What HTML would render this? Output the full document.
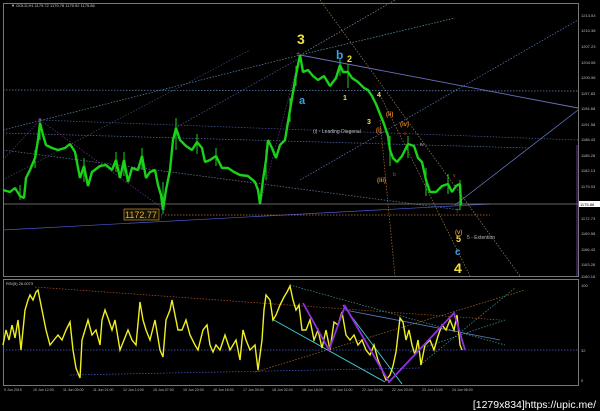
<!DOCTYPE html>
<html><head><meta charset="utf-8"><style>
html,body{margin:0;padding:0;background:#000;width:600px;height:411px;overflow:hidden}
svg{display:block}
text{font-family:"Liberation Sans",sans-serif}
</style></head><body>
<svg width="600" height="411" viewBox="0 0 600 411" xmlns="http://www.w3.org/2000/svg">
<rect width="600" height="411" fill="#000"/>
<rect x="3.5" y="3.5" width="575" height="273" fill="none" stroke="#777" stroke-width="1"/>
<rect x="3.5" y="279.5" width="575" height="106" fill="none" stroke="#777" stroke-width="1"/>
<text x="11" y="7" fill="#ccc" font-size="4">▼ GOLD,H1  1179.72 1179.78 1175.92 1175.86</text>
<g fill="none" stroke-width="0.7">
<line x1="3" y1="130" x2="300" y2="55" stroke="#5a8fb0" stroke-dasharray="1.5,1.5"/>
<line x1="300" y1="55" x2="455" y2="18" stroke="#5a9fb0" stroke-dasharray="1.5,1.5"/>
<line x1="300" y1="55" x2="395" y2="0" stroke="#7a8fb0" stroke-dasharray="1.5,1.5"/>
<line x1="40" y1="120" x2="578" y2="140" stroke="#4a5aa0" stroke-dasharray="1.5,1.5"/>
<line x1="175" y1="128" x2="300" y2="58" stroke="#4a5aa0" stroke-dasharray="1.5,1.5"/>
<line x1="300" y1="55" x2="578" y2="108" stroke="#6a70c0" stroke-width="0.9"/>
<line x1="3" y1="90" x2="578" y2="91" stroke="#6a90c0" stroke-dasharray="1.5,1.5"/>
<line x1="3" y1="133" x2="530" y2="148" stroke="#5a70b0" stroke-dasharray="1.5,1.5"/>
<line x1="3" y1="150" x2="460" y2="210" stroke="#6080a0" stroke-dasharray="1.5,1.5"/>
<line x1="300" y1="180" x2="578" y2="20" stroke="#5a80c0" stroke-dasharray="1.5,1.5"/>
<line x1="3" y1="180" x2="250" y2="50" stroke="#5a80c0" stroke-dasharray="1.5,1.5" opacity="0.6"/>
<line x1="455" y1="205" x2="578" y2="110" stroke="#6a80d0"/>
<line x1="3" y1="230" x2="490" y2="204" stroke="#4a5ad0"/>
<line x1="3" y1="204" x2="578" y2="204" stroke="#888"/>
<line x1="165" y1="215" x2="490" y2="215" stroke="#c07030" stroke-dasharray="1.5,1.5"/>
<line x1="320" y1="0" x2="520" y2="276" stroke="#a08060" stroke-dasharray="1.5,1.5"/>
<line x1="380" y1="95" x2="470" y2="276" stroke="#a08040" stroke-dasharray="1.5,1.5"/>
<line x1="380" y1="120" x2="395" y2="276" stroke="#b07030" stroke-dasharray="1.5,1.5"/>
<line x1="40" y1="120" x2="165" y2="210" stroke="#7a3090" stroke-dasharray="1.5,1.5"/>
<line x1="3" y1="160" x2="40" y2="120" stroke="#6a3090" stroke-dasharray="1.5,1.5"/>
<line x1="260" y1="205" x2="300" y2="55" stroke="#6a3090" stroke-dasharray="1.5,1.5"/>
</g>
<g fill="none" stroke="#19d219" stroke-linejoin="bevel">
<polyline stroke-width="2.4" points="3,190 10,192 15,188 20,196 24,198 26,178 30,170 35,158 38,140 40,123 43,135 46,145 52,148 58,150 65,148 70,144 75,152 80,178 84,166 88,186 92,172 100,166 106,165 112,170 116,160 120,178 124,160 128,182 132,168 138,170 142,156 146,178 150,172 155,170 158,185 161,195 163,210 166,190 170,170 173,140 176,128 180,140 186,146 192,150 197,142 202,148 205,162 210,160 216,156 222,168 228,168 234,172 240,175 248,176 255,182 258,190 260,204 263,180 266,160 268,140 272,148 276,158 280,145 285,140 290,110 292,98 296,75 300,55 303,72 308,70 313,76 318,80 324,76 330,86 336,78 340,65 343,72 348,72 352,78 358,82 364,88 368,90 372,96 376,104 380,114 384,124 388,136 390,150 393,158 397,162 402,156 408,144 414,146 418,158 422,162 426,180 430,192 436,192 442,186 448,184 452,192 456,186 460,184 461,205"/>
<path stroke-width="1" d="M20 185V200M35 150V168M40 118V140M84 158V182M116 152V172M124 152V176M142 148V170M163 182V214M176 118V150M197 134V154M216 148V166M266 150V180M290 98V122M296 66V86M340 58V76M348 64V88M390 136V166M408 136V158M426 168V196M448 174V194M460 180V210"/>
</g>
<g font-weight="bold">
<text x="297" y="44" fill="#f0e040" font-size="14">3</text>
<text x="336" y="59" fill="#3aa0e8" font-size="12">b</text>
<text x="347" y="62" fill="#f0e040" font-size="9">2</text>
<text x="299" y="104" fill="#3aa0e8" font-size="11">a</text>
<text x="343" y="100" fill="#f0e040" font-size="7">1</text>
<text x="377" y="97" fill="#f0e040" font-size="7">4</text>
<text x="367" y="124" fill="#f0e040" font-size="7">3</text>
<text x="386" y="116" fill="#e08020" font-size="6">(ii)</text>
<text x="400" y="126" fill="#e08020" font-size="6">(iv)</text>
<text x="376" y="132" fill="#e08020" font-size="6">(i)</text>
<text x="377" y="182" fill="#e08020" font-size="6">(iii)</text>
<text x="455" y="234" fill="#e08020" font-size="6">(v)</text>
<text x="456" y="242" fill="#f0e040" font-size="9">5</text>
<text x="455" y="255" fill="#3aa0e8" font-size="10">c</text>
<text x="454" y="273" fill="#f0e040" font-size="14">4</text>
</g>
<text x="313" y="133" fill="#bbb" font-size="5">(i) - Leading Diagonal</text>
<text x="467" y="239" fill="#bbb" font-size="5">5 - Extention</text>
<text x="387" y="140" fill="#b040b0" font-size="5">a</text>
<text x="393" y="176" fill="#b040b0" font-size="5">b</text>
<text x="404" y="135" fill="#c04040" font-size="5">c</text>
<text x="420" y="146" fill="#aaa" font-size="5">iv</text>
<text x="453" y="177" fill="#c04040" font-size="5">v</text>
<text x="38" y="122" fill="#d040d0" font-size="7">+</text>
<text x="296" y="56" fill="#d040d0" font-size="7">+</text>
<text x="455" y="213" fill="#3aa0e8" font-size="8">↑</text>
<rect x="124" y="209" width="35" height="11" fill="#1a1400" stroke="#c09030" stroke-width="0.7"/>
<text x="125" y="218" fill="#e0b040" font-size="9">1172.77</text>
<text x="160" y="218" fill="#3aa0e8" font-size="7">↑</text>
<g fill="#bbb" font-size="4">
<text x="581" y="17">1213.53</text><text x="581" y="32">1210.38</text><text x="581" y="48">1207.23</text><text x="581" y="64">1204.08</text><text x="581" y="79">1200.98</text><text x="581" y="95">1197.83</text><text x="581" y="110">1194.68</text><text x="581" y="126">1191.58</text><text x="581" y="141">1188.43</text><text x="581" y="157">1185.28</text><text x="581" y="172">1182.13</text><text x="581" y="188">1179.03</text><text x="581" y="220">1172.73</text><text x="581" y="235">1169.58</text><text x="581" y="251">1166.43</text><text x="581" y="266">1163.28</text><text x="581" y="278">1160.18</text>
<text x="581" y="287">100</text><text x="581" y="352">32</text><text x="581" y="382">0</text>
</g>
<rect x="579" y="201" width="21" height="6" fill="#fff"/>
<text x="580" y="206" fill="#000" font-size="4">1175.86</text>
<line x1="577" y1="145" x2="577" y2="276" stroke="#8040c0" stroke-width="0.8"/>
<text x="6" y="285" fill="#ccc" font-size="4">RSI(5) 26.0073</text>
<g fill="none" stroke-width="0.7" stroke-dasharray="1.5,1.5">
<line x1="3" y1="350" x2="578" y2="350" stroke="#4a5ad0"/>
<line x1="35" y1="287" x2="500" y2="320" stroke="#b05020"/>
<line x1="70" y1="375" x2="420" y2="368" stroke="#4a5ad0"/>
<line x1="255" y1="372" x2="525" y2="290" stroke="#a07030"/>
<line x1="290" y1="285" x2="505" y2="345" stroke="#40a0a0"/>
<line x1="420" y1="365" x2="515" y2="288" stroke="#40a0a0"/>
<line x1="410" y1="352" x2="505" y2="320" stroke="#40a0a0"/>
</g>
<line x1="272" y1="319" x2="385" y2="382" stroke="#40d0d0" stroke-width="0.9"/>
<line x1="343" y1="305" x2="402" y2="384" stroke="#40d0d0" stroke-width="0.9"/>
<line x1="345" y1="310" x2="500" y2="340" stroke="#5a80c0" stroke-width="0.8"/>
<polyline fill="none" stroke="#f0f020" stroke-width="1.4" points="3,345 6,330 9,340 12,325 15,338 18,320 21,350 25,310 28,300 30,295 33,300 36,292 38,290 40,300 43,315 46,330 50,345 54,340 58,335 62,340 66,330 70,322 73,350 76,368 80,378 82,340 85,330 88,320 92,335 96,330 100,345 102,320 105,310 108,318 112,330 115,320 120,350 124,340 128,330 132,340 136,345 140,302 143,320 146,330 150,340 155,320 160,350 163,357 166,320 170,310 172,300 175,315 178,330 182,330 186,320 190,335 195,345 198,350 203,330 207,325 210,345 213,352 216,345 220,350 225,335 230,350 236,340 240,360 243,330 246,340 250,350 255,345 258,370 262,340 264,310 266,295 270,300 273,320 276,315 280,305 284,297 287,292 290,286 293,300 296,310 299,305 302,330 306,330 310,320 314,340 318,330 322,348 326,330 330,350 334,322 338,325 342,312 346,335 350,340 354,335 358,345 362,340 366,350 370,355 374,345 378,360 382,370 386,380 390,375 393,366 396,352 400,318 403,322 406,340 409,330 412,345 415,355 418,340 421,365 425,345 430,340 434,350 438,336 442,325 446,330 450,320 454,330 457,315 460,345 462,350"/>
<polyline points="303,303 329,350 345,306 389,382 454,313 465,350" stroke="#9030e0" stroke-width="1.8" fill="none"/>
<g fill="#bbb" font-size="3.6">
<text x="4" y="391">9 Jun 2015</text><text x="33" y="391">10 Jun 12:00</text><text x="63" y="391">11 Jun 05:00</text><text x="93" y="391">11 Jun 21:00</text><text x="123" y="391">12 Jun 14:00</text><text x="153" y="391">15 Jun 07:00</text><text x="183" y="391">15 Jun 23:00</text><text x="213" y="391">16 Jun 16:00</text><text x="243" y="391">17 Jun 09:00</text><text x="272" y="391">18 Jun 02:00</text><text x="302" y="391">18 Jun 18:00</text><text x="332" y="391">19 Jun 11:00</text><text x="362" y="391">22 Jun 04:00</text><text x="392" y="391">22 Jun 20:00</text><text x="422" y="391">23 Jun 13:00</text><text x="452" y="391">24 Jun 06:00</text>
</g>
<text x="596" y="408" text-anchor="end" fill="#fff" font-size="10.5" font-family="Liberation Mono,monospace">[1279x834]https://upic.me/</text>
</svg>
</body></html>
